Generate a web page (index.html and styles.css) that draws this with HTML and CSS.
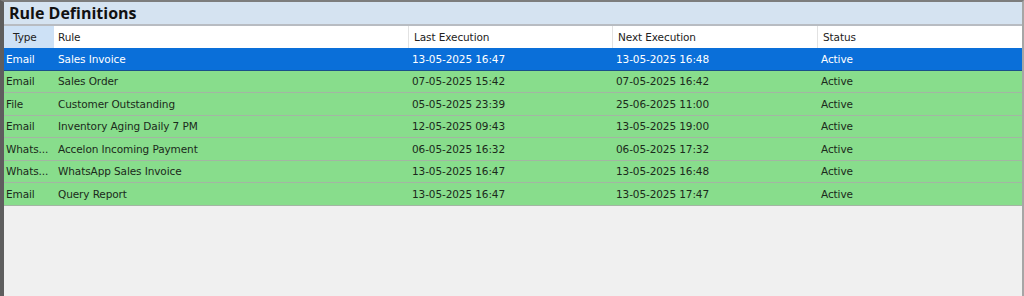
FILE: index.html
```html
<!DOCTYPE html>
<html>
<head>
<meta charset="utf-8">
<link rel="stylesheet" href="styles.css">
</head>
<body>
<div class="frame">
  <div class="panel">
    <div class="title">Rule Definitions</div>
    <div class="grid">
      <div class="row head">
        <div class="cell c-type sorted">Type</div>
        <div class="cell c-rule">Rule</div>
        <div class="cell c-last">Last Execution</div>
        <div class="cell c-next">Next Execution</div>
        <div class="cell c-status">Status</div>
      </div>
      <div class="row sel">
        <div class="cell c-type">Email</div>
        <div class="cell c-rule">Sales Invoice</div>
        <div class="cell c-last">13-05-2025 16:47</div>
        <div class="cell c-next">13-05-2025 16:48</div>
        <div class="cell c-status">Active</div>
      </div>
      <div class="row ok">
        <div class="cell c-type">Email</div>
        <div class="cell c-rule">Sales Order</div>
        <div class="cell c-last">07-05-2025 15:42</div>
        <div class="cell c-next">07-05-2025 16:42</div>
        <div class="cell c-status">Active</div>
      </div>
      <div class="row ok">
        <div class="cell c-type">File</div>
        <div class="cell c-rule">Customer Outstanding</div>
        <div class="cell c-last">05-05-2025 23:39</div>
        <div class="cell c-next">25-06-2025 11:00</div>
        <div class="cell c-status">Active</div>
      </div>
      <div class="row ok">
        <div class="cell c-type">Email</div>
        <div class="cell c-rule">Inventory Aging Daily 7 PM</div>
        <div class="cell c-last">12-05-2025 09:43</div>
        <div class="cell c-next">13-05-2025 19:00</div>
        <div class="cell c-status">Active</div>
      </div>
      <div class="row ok">
        <div class="cell c-type">Whats...</div>
        <div class="cell c-rule">Accelon Incoming Payment</div>
        <div class="cell c-last">06-05-2025 16:32</div>
        <div class="cell c-next">06-05-2025 17:32</div>
        <div class="cell c-status">Active</div>
      </div>
      <div class="row ok">
        <div class="cell c-type">Whats...</div>
        <div class="cell c-rule">WhatsApp Sales Invoice</div>
        <div class="cell c-last">13-05-2025 16:47</div>
        <div class="cell c-next">13-05-2025 16:48</div>
        <div class="cell c-status">Active</div>
      </div>
      <div class="row ok">
        <div class="cell c-type">Email</div>
        <div class="cell c-rule">Query Report</div>
        <div class="cell c-last">13-05-2025 16:47</div>
        <div class="cell c-next">13-05-2025 17:47</div>
        <div class="cell c-status">Active</div>
      </div>
    </div>
  </div>
</div>
</body>
</html>
```
FILE: styles.css
```css
html, body {
  margin: 0;
  padding: 0;
  width: 1024px;
  height: 296px;
  overflow: hidden;
  background: #f0f0f0;
  font-family: "DejaVu Sans", "Liberation Sans", sans-serif;
}
.frame {
  height: 296px;
  box-sizing: border-box;
  border-top: 2px solid #7d7d7d;
  border-left: 4px solid #5e5e5e;
  border-right: 2px solid #a6a6a6;
  background: #f0f0f0;
}
.panel {
  display: flex;
  flex-direction: column;
}
.title {
  height: 22px;
  line-height: 22px;
  background: #d5e3f1;
  border-bottom: 2px solid #b8bcc2;
  padding-left: 5px;
  font-family: "Open Sans", "DejaVu Sans", sans-serif;
  font-weight: 700;
  font-size: 16px;
  color: #111;
}
.grid {
  display: flex;
  flex-direction: column;
}
.row {
  display: grid;
  grid-template-columns: 50px 354px 204px 205px 1fr;
  height: 22.5px;
  box-sizing: border-box;
  font-size: 10.5px;
  letter-spacing: -0.1px;
}
.cell {
  display: flex;
  align-items: center;
  white-space: nowrap;
  overflow: hidden;
}
.head {
  height: 22px;
  background: #ffffff;
  color: #222;
}
.head .cell {
  border-left: 1px solid #e2e2e2;
  padding-left: 5px;
}
.head .cell.c-type {
  border-left: none;
  padding-left: 9px;
}
.head .cell.c-rule {
  border-left: none;
  padding-left: 4px;
}
.head .sorted {
  background: #cde1f6;
}
.row:not(.head) .cell {
  padding-left: 4px;
}
.row:not(.head) .cell.c-type {
  padding-left: 2px;
}
.sel {
  background: #0a6fd9;
  color: #ffffff;
  border-bottom: 1px solid #1a4f8a;
}
.ok {
  background: #88dd8c;
  color: #1b2a1b;
  border-bottom: 1px solid #a3b6a3;
}
```
